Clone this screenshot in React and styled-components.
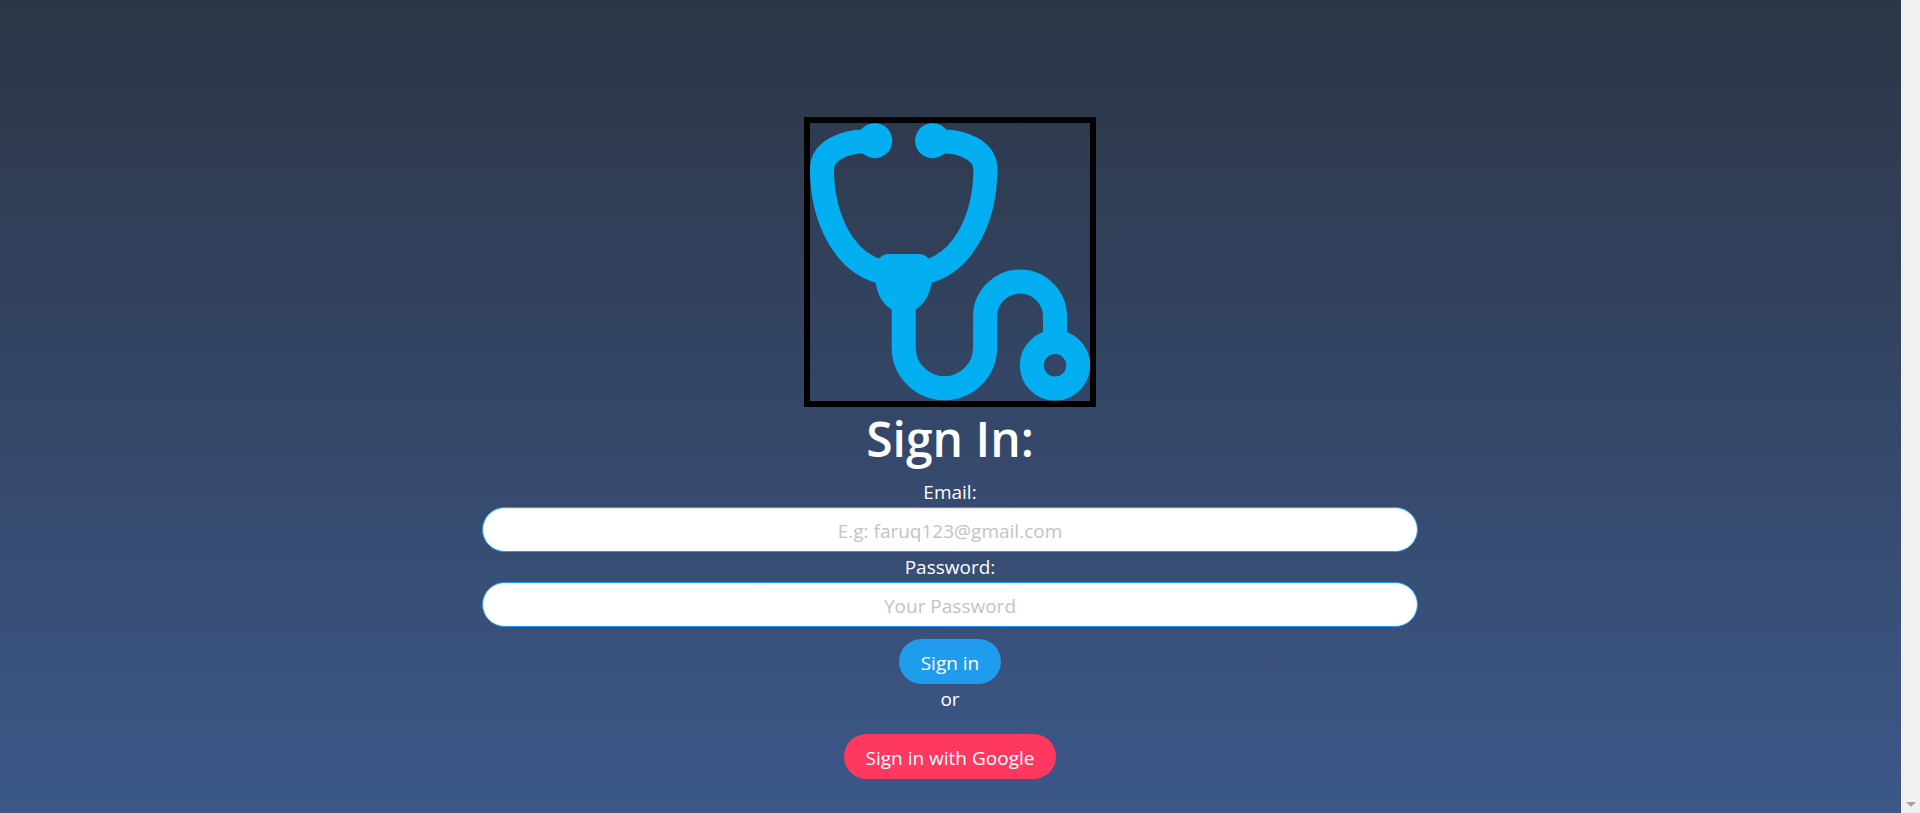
import React from "react";
import styled, { createGlobalStyle } from "styled-components";

const GlobalStyle = createGlobalStyle`
  *, *::before, *::after { box-sizing: border-box; }
  body {
    margin: 0;
    font-family: "Segoe UI", "Open Sans", "Noto Sans", sans-serif;
    font-size: 19px;
    line-height: 30px;
    color: #fff;
  }
`;

const Shell = styled.div`
  display: flex;
  min-height: 100vh;
`;

const Page = styled.main`
  flex: 1;
  display: flex;
  flex-direction: column;
  align-items: center;
  padding: 117px 15px 34px 14px;
  background: linear-gradient(#2c3545, #3c5889);
`;

const ScrollTrack = styled.div`
  width: 19px;
  flex: none;
  display: flex;
  align-items: flex-end;
  justify-content: center;
  padding-bottom: 6px;
  background: #f0f0f0;
`;

const LogoFrame = styled.div`
  border: 6px solid #000;
  line-height: 0;
`;

const Title = styled.h1`
  margin: 4px 0 10px;
  font-size: 48px;
  font-weight: 600;
  line-height: 56px;
`;

const Form = styled.form`
  width: 50%;
  display: flex;
  flex-direction: column;
  align-items: center;
`;

const Field = styled.div`
  width: 100%;
  display: flex;
  flex-direction: column;
  text-align: center;
`;

const Input = styled.input`
  width: 100%;
  height: 45px;
  padding: 2px 20px 0;
  border: 1px solid #209cee;
  border-radius: 23px;
  background: #fff;
  box-shadow: inset 0 1px 2px rgba(10, 10, 10, 0.1);
  color: #363636;
  font: inherit;
  text-align: center;

  &::placeholder { color: #c3c3c3; opacity: 1; }
`;

const Button = styled.button`
  height: 45px;
  margin-top: ${(p) => p.$gap}px;
  padding: 2px 22px 0;
  border: 0;
  border-radius: 23px;
  background: ${(p) => p.$color};
  color: #fff;
  font: inherit;
  cursor: pointer;
`;

function Stethoscope() {
  return (
    <svg width="280" height="278" viewBox="0 0 280 278" fill="none" role="img" aria-label="Stethoscope">
      <g stroke="#03aff1" strokeWidth="24">
        <path d="M60 18.5H54C34 18.5 12 28 12 46C12 95 34 140 72 149" />
        <path d="M127.4 18.5H133.4C153.4 18.5 175.4 28 175.4 46C175.4 95 153.4 140 115.4 149" />
        <path d="M93.7 170V224.5A40.7 40.7 0 0 0 175.1 224.5V193.5A34.950 34.950 0 0 1 245 193.5V220" />
        <circle cx="245" cy="242.3" r="23.2" />
      </g>
      <g fill="#03aff1">
        <circle cx="64.8" cy="17.7" r="17.5" />
        <circle cx="122.6" cy="17.7" r="17.5" />
        <path d="M79 131H108C113 131 117 133 120 137L121.500 161C119 173 114 181 106 186H81C73 181 68 173 66 161L68 137C71 133 74 131 79 131Z" />
      </g>
    </svg>
  );
}

export default function App() {
  return (
    <>
      <GlobalStyle />
      <Shell>
        <Page>
          <LogoFrame>
            <Stethoscope />
          </LogoFrame>
          <Title>Sign In:</Title>
          <Form onSubmit={(e) => e.preventDefault()}>
            <Field>
              <label htmlFor="email">Email:</label>
              <Input id="email" type="email" placeholder="E.g: faruq123@gmail.com" />
            </Field>
            <Field>
              <label htmlFor="password">Password:</label>
              <Input id="password" type="password" placeholder="Your Password" />
            </Field>
            <Button type="submit" $color="#209cee" $gap={12}>Sign in</Button>
            <span>or</span>
            <Button type="button" $color="#ff3860" $gap={20}>Sign in with Google</Button>
          </Form>
        </Page>
        <ScrollTrack aria-hidden="true">
          <svg width="10" height="5" viewBox="0 0 10 5">
            <path d="M0 0H10L5 5Z" fill="#a3a3a3" />
          </svg>
        </ScrollTrack>
      </Shell>
    </>
  );
}
